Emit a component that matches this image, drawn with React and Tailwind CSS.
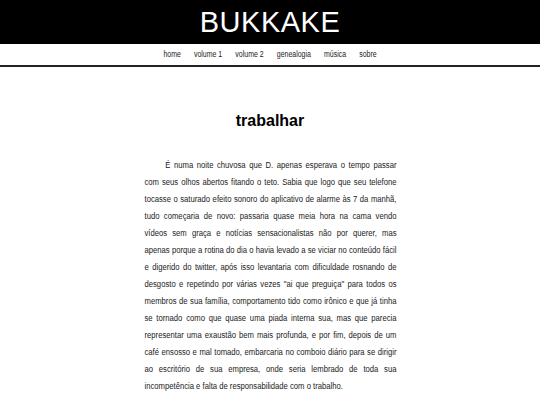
import React from 'react'

const links = ['home', 'volume 1', 'volume 2', 'genealogia', 'música', 'sobre']

const text =
    'É numa noite chuvosa que D. apenas esperava o tempo passar com seus olhos abertos fitando o teto. Sabia que logo que seu telefone tocasse o saturado efeito sonoro do aplicativo de alarme às 7 da manhã, tudo começaria de novo: passaria quase meia hora na cama vendo vídeos sem graça e notícias sensacionalistas não por querer, mas apenas porque a rotina do dia o havia levado a se viciar no conteúdo fácil e digerido do twitter, após isso levantaria com dificuldade rosnando de desgosto e repetindo por várias vezes "ai que preguiça" para todos os membros de sua família, comportamento tido como irônico e que já tinha se tornado como que quase uma piada interna sua, mas que parecia representar uma exaustão bem mais profunda, e por fim, depois de um café ensosso e mal tomado, embarcaria no comboio diário para se dirigir ao escritório de sua empresa, onde seria lembrado de toda sua incompetência e falta de responsabilidade com o trabalho.'

const App = () => {
    return (
        <div className="min-h-screen bg-white font-['Liberation_Sans',Arial,sans-serif] overflow-hidden">
            {/* header */}
            <header className="bg-black h-[44px] flex items-center justify-center">
                <h1 className="text-white text-[29px] leading-none tracking-[0.5px]">BUKKAKE</h1>
            </header>

            {/* nav - narrow type */}
            <nav className="h-[23px] border-b-2 border-[#222] flex items-center justify-center">
                <div className="flex items-center gap-[16px] text-[8.5px] text-[#222] scale-x-[0.82]">
                    {links.map((link) => (
                        <a key={link} href="#" className="leading-none">
                            {link}
                        </a>
                    ))}
                </div>
            </nav>

            <main className="flex flex-col items-center pt-[44px]">
                <h2 className="text-[16px] font-bold text-black leading-[20px]">trabalhar</h2>
                <p className="w-[315px] shrink-0 mt-[25px] text-justify indent-[26px] text-[9.6px] leading-[17px] text-[#222] scale-x-[0.8]">
                    {text}
                </p>
            </main>
        </div>
    )
}

export default App
